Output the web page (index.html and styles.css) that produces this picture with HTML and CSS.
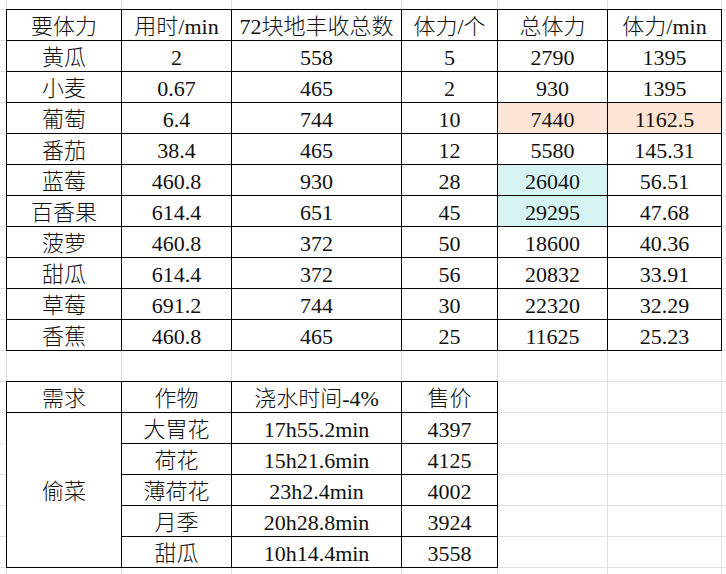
FILE: index.html
```html
<!DOCTYPE html>
<html lang="zh-CN">
<head>
<meta charset="utf-8">
<title>体力表</title>
<link rel="stylesheet" href="styles.css">
</head>
<body>
<div class="sheet">
  <div class="grid grid-main">
    <div class="cell">要体力</div><div class="cell">用时/min</div><div class="cell">72块地丰收总数</div><div class="cell">体力/个</div><div class="cell">总体力</div><div class="cell">体力/min</div>
    <div class="cell">黄瓜</div><div class="cell">2</div><div class="cell">558</div><div class="cell">5</div><div class="cell">2790</div><div class="cell">1395</div>
    <div class="cell">小麦</div><div class="cell">0.67</div><div class="cell">465</div><div class="cell">2</div><div class="cell">930</div><div class="cell">1395</div>
    <div class="cell">葡萄</div><div class="cell">6.4</div><div class="cell">744</div><div class="cell">10</div><div class="cell peach">7440</div><div class="cell peach">1162.5</div>
    <div class="cell">番茄</div><div class="cell">38.4</div><div class="cell">465</div><div class="cell">12</div><div class="cell">5580</div><div class="cell">145.31</div>
    <div class="cell">蓝莓</div><div class="cell">460.8</div><div class="cell">930</div><div class="cell">28</div><div class="cell cyan">26040</div><div class="cell">56.51</div>
    <div class="cell">百香果</div><div class="cell">614.4</div><div class="cell">651</div><div class="cell">45</div><div class="cell cyan">29295</div><div class="cell">47.68</div>
    <div class="cell">菠萝</div><div class="cell">460.8</div><div class="cell">372</div><div class="cell">50</div><div class="cell">18600</div><div class="cell">40.36</div>
    <div class="cell">甜瓜</div><div class="cell">614.4</div><div class="cell">372</div><div class="cell">56</div><div class="cell">20832</div><div class="cell">33.91</div>
    <div class="cell">草莓</div><div class="cell">691.2</div><div class="cell">744</div><div class="cell">30</div><div class="cell">22320</div><div class="cell">32.29</div>
    <div class="cell">香蕉</div><div class="cell">460.8</div><div class="cell">465</div><div class="cell">25</div><div class="cell">11625</div><div class="cell">25.23</div>
  </div>
  <div class="grid grid-steal">
    <div class="cell">需求</div><div class="cell">作物</div><div class="cell">浇水时间-4%</div><div class="cell">售价</div>
    <div class="cell span5">偷菜</div><div class="cell">大胃花</div><div class="cell">17h55.2min</div><div class="cell">4397</div>
    <div class="cell">荷花</div><div class="cell">15h21.6min</div><div class="cell">4125</div>
    <div class="cell">薄荷花</div><div class="cell">23h2.4min</div><div class="cell">4002</div>
    <div class="cell">月季</div><div class="cell">20h28.8min</div><div class="cell">3924</div>
    <div class="cell">甜瓜</div><div class="cell">10h14.4min</div><div class="cell">3558</div>
  </div>
</div>
</body>
</html>
```
FILE: styles.css
```css
html, body {
  margin: 0;
  padding: 0;
}
body {
  min-height: 574px;
  background-color: #ffffff;
  background-image:
    linear-gradient(#e2e2e2, #e2e2e2),
    linear-gradient(#e2e2e2, #e2e2e2),
    linear-gradient(#e2e2e2, #e2e2e2),
    linear-gradient(#e2e2e2, #e2e2e2),
    linear-gradient(#e2e2e2, #e2e2e2),
    linear-gradient(#e2e2e2, #e2e2e2),
    linear-gradient(#e2e2e2, #e2e2e2),
    repeating-linear-gradient(to bottom, #e2e2e2 0 1px, transparent 1px 31px);
  background-size: 1px 100%, 1px 100%, 1px 100%, 1px 100%, 1px 100%, 1px 100%, 1px 100%, 100% 31px;
  background-position: 6px 0, 121px 0, 231px 0, 401px 0, 497px 0, 607px 0, 721px 0, 0 9px;
  background-repeat: no-repeat, no-repeat, no-repeat, no-repeat, no-repeat, no-repeat, no-repeat, repeat;
  font-family: "Liberation Serif", "Noto Sans CJK SC", serif;
  font-size: 22px;
  font-weight: 300;
  color: #111;
}
.sheet {
  padding: 9px 0 0 6px;
  display: flex;
  flex-direction: column;
  align-items: flex-start;
  gap: 30px;
}
.grid {
  display: grid;
  gap: 1px;
  padding: 1px;
  background: #000;
  grid-auto-rows: 30px;
}
.grid-main {
  grid-template-columns: 114px 109px 169px 95px 109px 113px;
}
.grid-steal {
  grid-template-columns: 114px 109px 169px 95px;
}
.cell {
  background: #fff;
  display: flex;
  align-items: center;
  justify-content: center;
  padding-top: 3px;
  box-sizing: border-box;
  white-space: nowrap;
  line-height: 1;
}
.span5 {
  grid-row: span 5;
}
.peach {
  background: #fde4d4;
}
.cyan {
  background: #d6f4f1;
}
```
